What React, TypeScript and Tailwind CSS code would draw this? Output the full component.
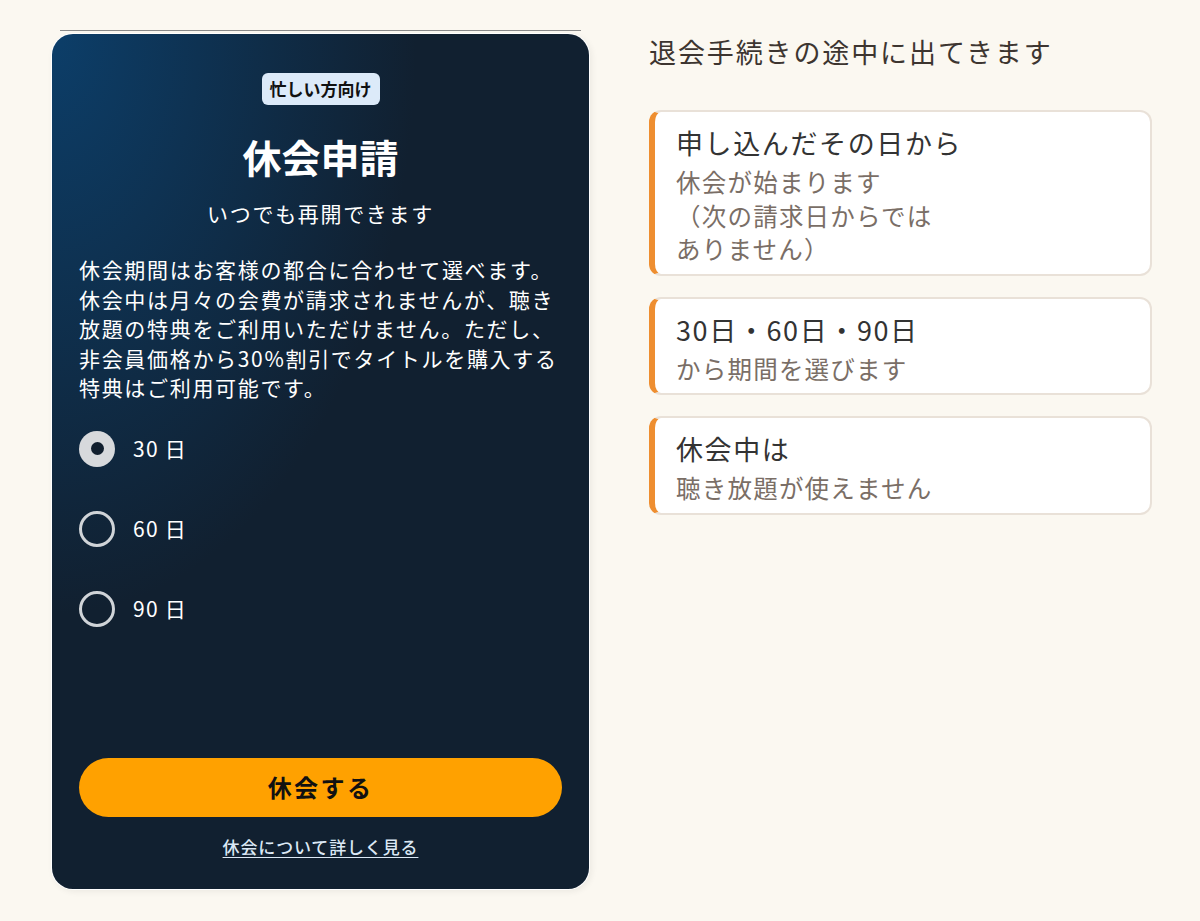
import React from "react";

const jp = { fontFamily: '"Noto Sans CJK JP", "Noto Sans", sans-serif' };

const periods = ["30", "60", "90"];

function Radio({ checked, label }: { checked: boolean; label: string }) {
    return (
        <label className="flex items-center gap-[18px] cursor-pointer">
            {checked ? (
                <span className="w-[36px] h-[36px] rounded-full bg-[#d7d9dc] flex items-center justify-center">
                    <span className="w-[13px] h-[13px] rounded-full bg-[#111f2e]" />
                </span>
            ) : (
                <span className="w-[36px] h-[36px] rounded-full border-[3px] border-[#d0d4d8]" />
            )}
            <span className="text-[21px] tracking-[0.06em] text-white">{label} 日</span>
        </label>
    );
}

function PauseCard() {
    const [selected, setSelected] = React.useState("30");

    return (
        <div className="w-[539px] flex flex-col">
            <div className="h-px bg-[#8a8a8a] mx-[9px] mb-[2px]" />
            <div className="rounded-[22px] bg-white p-[1px] shadow-[2px_2px_6px_rgba(0,0,0,0.06)]">
                <div className="h-[855px] rounded-[21px] bg-[#112030] bg-[radial-gradient(ellipse_at_top_left,#0c3e69_0%,#112030_48%)] px-[27px] pt-[39px] pb-[30px] flex flex-col">
                    <div className="flex justify-center">
                        <span className="h-[32px] px-[8px] rounded-md bg-[#dceaf9] text-[#111] text-[17px] font-bold flex items-center">
                            忙しい方向け
                        </span>
                    </div>
                    <h2 className="mt-[27px] text-center text-[39px] leading-[48px] font-bold text-white">休会申請</h2>
                    <p className="mt-[18px] text-center text-[21px] leading-[30px] tracking-[0.08em] text-white">いつでも再開できます</p>
                    <p className="mt-[27px] text-[21px] leading-[29.5px] tracking-[0.08em] text-white whitespace-nowrap">
                        休会期間はお客様の都合に合わせて選べます。
                        <br />
                        休会中は月々の会費が請求されませんが、聴き
                        <br />
                        放題の特典をご利用いただけません。ただし、
                        <br />
                        非会員価格から30%割引でタイトルを購入する
                        <br />
                        特典はご利用可能です。
                    </p>
                    <div className="mt-[28px] flex flex-col gap-[44px]">
                        {periods.map((p) => (
                            <div key={p} onClick={() => setSelected(p)}>
                                <Radio checked={selected === p} label={p} />
                            </div>
                        ))}
                    </div>
                    <button className="mt-auto h-[59px] w-full rounded-full bg-[#ffa100] text-[#111] text-[24px] tracking-[0.1em] font-bold">
                        休会する
                    </button>
                    <a href="#" className="mt-[17px] text-center text-[17px] tracking-[0.05em] font-medium text-[#dbe8f5] underline underline-offset-[3px]">
                        休会について詳しく見る
                    </a>
                </div>
            </div>
        </div>
    );
}

function NoteCard({ title, lines }: { title: string; lines: string[] }) {
    return (
        <div className="rounded-xl bg-white border-2 border-[#e9e1d8] border-l-[6px] border-l-[#ee8e30] pl-[21px] pr-4 pt-[13px] pb-[8px]">
            <p className="text-[27px] leading-[36px] tracking-[0.06em] text-[#333]">{title}</p>
            <p className="mt-1 text-[24.5px] leading-[33.5px] tracking-[0.05em] text-[#7a6e66]">
                {lines.map((l, i) => (
                    <React.Fragment key={i}>
                        {i > 0 && <br />}
                        {l}
                    </React.Fragment>
                ))}
            </p>
        </div>
    );
}

export default function App() {
    return (
        <div className="min-h-[921px] bg-[#fbf8f1] pl-[51px] pt-[30px] flex gap-[59px]" style={jp}>
            <PauseCard />
            <div className="w-[503px] pt-[6px]">
                <h3 className="text-[27px] leading-[32px] tracking-[0.07em] text-[#3d3530]">退会手続きの途中に出てきます</h3>
                <div className="mt-[42px] flex flex-col gap-[21px]">
                    <NoteCard title="申し込んだその日から" lines={["休会が始まります", "（次の請求日からでは", "ありません）"]} />
                    <NoteCard title="30日・60日・90日" lines={["から期間を選びます"]} />
                    <NoteCard title="休会中は" lines={["聴き放題が使えません"]} />
                </div>
            </div>
        </div>
    );
}
